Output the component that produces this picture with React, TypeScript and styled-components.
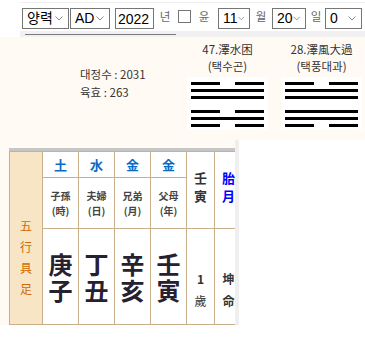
import React from 'react';
import styled, { createGlobalStyle } from 'styled-components';

const GlobalStyle = createGlobalStyle`
  html, body {
    margin: 0;
    padding: 0;
    background: #ffffff;
  }
  body {
    font-family: "Noto Sans CJK KR", "Liberation Sans", sans-serif;
  }
`;

const Page = styled.div`
  width: 365px;
`;

const TopBar = styled.div`
  height: 31px;
  box-sizing: border-box;
  padding-top: 2px;
`;

const TopRule = styled.div`
  margin-left: 20px;
  height: 1px;
  background: #efefef;
`;

const FormRow = styled.div`
  display: flex;
  align-items: center;
  height: 21px;
  margin-top: 5px;
  padding-left: 22px;
`;

const SelectBox = styled.div<{ $w: number; $ml?: number }>`
  display: flex;
  align-items: center;
  justify-content: space-between;
  width: ${(p) => p.$w}px;
  height: 21px;
  margin-left: ${(p) => p.$ml || 0}px;
  box-sizing: border-box;
  border: 1px solid #767676;
  padding: 0 5px 0 4px;
  background: #fff;
  cursor: default;
`;

const SelectValue = styled.span`
  font-family: "Liberation Sans", "Noto Sans CJK KR", sans-serif;
  font-size: 14px;
  line-height: 19px;
  color: #000;
  white-space: nowrap;
`;

const YearInput = styled.input`
  width: 39px;
  height: 21px;
  margin: 0 0 0 5px;
  box-sizing: border-box;
  border: 1px solid #767676;
  padding: 0 2px;
  font-family: "Liberation Sans", sans-serif;
  font-size: 14px;
  line-height: 19px;
  color: #000;
  outline: none;
`;

const Label = styled.span<{ $ml: number }>`
  align-self: flex-start;
  width: 12px;
  height: 21px;
  margin-left: ${(p) => p.$ml}px;
  line-height: 17px;
  text-align: center;
  font-size: 11.5px;
  color: #666;
`;

const Check = styled.input`
  appearance: none;
  -webkit-appearance: none;
  align-self: flex-start;
  width: 13px;
  height: 13px;
  margin: 2px 0 0 7px;
  box-sizing: border-box;
  border: 1px solid #767676;
  background: #fff;
`;

const GreyBand = styled.div`
  margin-left: 20px;
  height: 6px;
  box-sizing: border-box;
  padding-top: 3px;
  background: #f1f1f1;
`;

const BandLine = styled.div`
  margin-left: 5px;
  width: 151px;
  height: 1px;
  background: #7a7a7a;
`;

const Cream = styled.div`
  background: #fffaf4;
`;

const InfoSection = styled.div`
  display: flex;
  height: 103px;
  box-sizing: border-box;
  padding-top: 4px;
`;

const Stats = styled.div`
  flex: none;
  width: 187px;
  box-sizing: border-box;
  padding: 24px 0 0 80px;
  font-size: 11.5px;
  line-height: 18px;
  color: #333;
  white-space: nowrap;
`;

const HexBlock = styled.div<{ $ml: number }>`
  flex: none;
  width: 81px;
  margin-left: ${(p) => p.$ml}px;
`;

const HexLabel = styled.div`
  font-size: 11.5px;
  line-height: 17px;
  text-align: center;
  color: #333;
  white-space: nowrap;
`;

const HexBox = styled.div`
  margin-top: 2px;
  height: 53px;
  box-sizing: border-box;
  padding: 5px 4px 0;
  background: #fff;
  svg {
    display: block;
  }
`;

const LowerSection = styled.div`
  display: flex;
  height: 185px;
`;

const TableArea = styled.div`
  flex: none;
  width: 235px;
  box-sizing: border-box;
  padding: 8px 0 0 9px;
  overflow: hidden;
`;

const Strip = styled.div`
  flex: none;
  width: 4px;
  background: #efefef;
`;

const WhiteArea = styled.div`
  flex: 1;
  background: #fff;
`;

const TableFrame = styled.div`
  width: 226px;
  border-top: 3px solid #c6c6c6;
  overflow: hidden;
`;

const Table = styled.table`
  border-collapse: collapse;
  table-layout: fixed;
  width: 233px;
  background: #fff;
  td {
    border: 1px solid #c9b08a;
    padding: 0;
    text-align: center;
    vertical-align: middle;
  }
`;

const Row = styled.tr<{ $h: number }>`
  height: ${(p) => p.$h}px;
`;

const SideCell = styled.td`
  background: #f7e5c5;
  color: #d06a00;
  font-size: 12px;
  line-height: 21px;
  padding-top: 38px !important;
`;

const ElemCell = styled.td`
  color: #0b6ac4;
  font-size: 13px;
  font-weight: 700;
`;

const RoleCell = styled.td`
  color: #444;
  font-size: 10px;
  font-weight: 700;
  line-height: 15px;
`;

const BigCell = styled.td`
  color: #262030;
  font-size: 24px;
  font-weight: 700;
  line-height: 26px;
`;

const PillarCell = styled.td<{ $tone?: 'blue' }>`
  color: ${(p) => (p.$tone === 'blue' ? '#0000ff' : '#333')};
  font-size: 13px;
  font-weight: 700;
  line-height: 18px;
  padding-bottom: 6px !important;
`;

const AgeCell = styled.td`
  color: #333;
  font-size: 12px;
  line-height: 22px;
  padding-top: 26px !important;
  b {
    font-weight: 700;
  }
`;

function Drop({ w, ml, value }: { w: number; ml?: number; value: string }) {
  return (
    <SelectBox $w={w} $ml={ml} role="combobox">
      <SelectValue>{value}</SelectValue>
      <svg width="8" height="5" viewBox="0 0 8 5">
        <path d="M0.5 0.5 L4 4 L7.5 0.5" fill="none" stroke="#8a8a8a" strokeWidth="1" />
      </svg>
    </SelectBox>
  );
}

function Hexagram({ lines }: { lines: number[] }) {
  return (
    <svg width="73" height="45" viewBox="0 0 73 45">
      {lines.map((yang, i) => {
        const y = i < 3 ? i * 7 : 28 + (i - 3) * 7;
        return yang ? (
          <rect key={i} x="0" y={y} width="73" height="3" fill="#000" />
        ) : (
          <g key={i}>
            <rect x="0" y={y} width="29" height="3" fill="#000" />
            <rect x="44" y={y} width="29" height="3" fill="#000" />
          </g>
        );
      })}
    </svg>
  );
}

const roles = [
  ['子孫', '(時)'],
  ['夫婦', '(日)'],
  ['兄弟', '(月)'],
  ['父母', '(年)'],
];

const pillars = [
  ['庚', '子'],
  ['丁', '丑'],
  ['辛', '亥'],
  ['壬', '寅'],
];

export default function App() {
  return (
    <Page>
      <GlobalStyle />
      <TopBar>
        <TopRule />
        <FormRow>
          <Drop w={47} value="양력" />
          <Drop w={40} ml={1} value="AD" />
          <YearInput defaultValue="2022" />
          <Label $ml={5}>년</Label>
          <Check type="checkbox" />
          <Label $ml={7}>윤</Label>
          <Drop w={32} ml={8} value="11" />
          <Label $ml={5}>월</Label>
          <Drop w={34} ml={5} value="20" />
          <Label $ml={4}>일</Label>
          <Drop w={37} ml={3} value="0" />
        </FormRow>
      </TopBar>
      <GreyBand>
        <BandLine />
      </GreyBand>
      <Cream>
        <InfoSection>
          <Stats>
            <div>대정수 : 2031</div>
            <div>육효 : 263</div>
          </Stats>
          <HexBlock $ml={0}>
            <HexLabel>47.澤水困</HexLabel>
            <HexLabel>(택수곤)</HexLabel>
            <HexBox>
              <Hexagram lines={[0, 1, 1, 0, 1, 0]} />
            </HexBox>
          </HexBlock>
          <HexBlock $ml={13}>
            <HexLabel>28.澤風大過</HexLabel>
            <HexLabel>(택풍대과)</HexLabel>
            <HexBox>
              <Hexagram lines={[0, 1, 1, 1, 1, 0]} />
            </HexBox>
          </HexBlock>
        </InfoSection>
        <LowerSection>
          <TableArea>
            <TableFrame>
              <Table>
                <colgroup>
                  <col style={{ width: 33 }} />
                  <col style={{ width: 36 }} />
                  <col style={{ width: 36 }} />
                  <col style={{ width: 36 }} />
                  <col style={{ width: 36 }} />
                  <col style={{ width: 28 }} />
                  <col style={{ width: 28 }} />
                </colgroup>
                <tbody>
                  <Row $h={26}>
                    <SideCell rowSpan={3}>
                      五<br />行<br />具<br />足
                    </SideCell>
                    <ElemCell>土</ElemCell>
                    <ElemCell>水</ElemCell>
                    <ElemCell>金</ElemCell>
                    <ElemCell>金</ElemCell>
                    <PillarCell rowSpan={2}>
                      壬<br />寅
                    </PillarCell>
                    <PillarCell rowSpan={2} $tone="blue">
                      胎<br />月
                    </PillarCell>
                  </Row>
                  <Row $h={51}>
                    {roles.map(([a, b]) => (
                      <RoleCell key={a}>
                        {a}
                        <br />
                        {b}
                      </RoleCell>
                    ))}
                  </Row>
                  <Row $h={96}>
                    {pillars.map(([a, b]) => (
                      <BigCell key={a + b}>
                        {a}
                        <br />
                        {b}
                      </BigCell>
                    ))}
                    <AgeCell>
                      <b>1</b>
                      <br />
                      歲
                    </AgeCell>
                    <AgeCell>
                      <b>坤</b>
                      <br />
                      <b>命</b>
                    </AgeCell>
                  </Row>
                </tbody>
              </Table>
            </TableFrame>
          </TableArea>
          <Strip />
          <WhiteArea />
        </LowerSection>
      </Cream>
    </Page>
  );
}
